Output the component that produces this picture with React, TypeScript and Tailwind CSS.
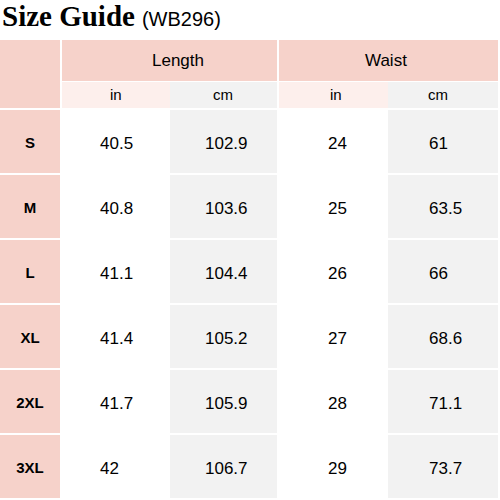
const rows = [
  { size: 'S', lin: '40.5', lcm: '102.9', win: '24', wcm: '61' },
  { size: 'M', lin: '40.8', lcm: '103.6', win: '25', wcm: '63.5' },
  { size: 'L', lin: '41.1', lcm: '104.4', win: '26', wcm: '66' },
  { size: 'XL', lin: '41.4', lcm: '105.2', win: '27', wcm: '68.6' },
  { size: '2XL', lin: '41.7', lcm: '105.9', win: '28', wcm: '71.1' },
  { size: '3XL', lin: '42', lcm: '106.7', win: '29', wcm: '73.7' },
]

const sans = "font-['Liberation_Sans',Arial,sans-serif]"

export default function App() {
  return (
    <div className={`w-[500px] h-[500px] bg-white text-black ${sans}`}>
      <div className="h-[40px] flex items-baseline pl-[2px]">
        <span className="font-['Liberation_Serif','Times_New_Roman',serif] font-bold text-[29px] leading-[32px]">
          Size Guide
        </span>
        <span className="ml-[7px] text-[20px] leading-[32px]">(WB296)</span>
      </div>

      <div className="flex gap-[2px] w-[498px]">
        {/* size column */}
        <div className="w-[60px] flex flex-col gap-[2px]">
          <div className="h-[68px] bg-[#f6d2ca]" />
          {rows.map(r => (
            <div key={r.size} className="h-[63px] bg-[#f6d2ca] flex items-center justify-center text-[15px] font-bold pt-[3px]">
              {r.size}
            </div>
          ))}
        </div>

        {/* Length */}
        <div className="w-[215px] flex flex-col">
          <div className="h-[41px] bg-[#f6d2ca] flex items-center pl-[90px] text-[17px] pt-[1px]">Length</div>
          <div className="h-[26px] mt-[1px] flex text-[15px]">
            <div className="w-[108px] bg-[#fdefec] flex items-center pl-[48px]">in</div>
            <div className="flex-1 bg-[#f2f2f2] flex items-center pl-[43px]">cm</div>
          </div>
          <div className="flex mt-[2px] text-[17px]">
            <div className="w-[108px] bg-white flex flex-col gap-[2px]">
              {rows.map(r => (
                <div key={r.size} className="h-[63px] flex items-center pl-[38px] pt-[4px]">{r.lin}</div>
              ))}
            </div>
            <div className="flex-1 flex flex-col gap-[2px]">
              {rows.map(r => (
                <div key={r.size} className="h-[63px] bg-[#f2f2f2] flex items-center pl-[35px] pt-[4px]">{r.lcm}</div>
              ))}
            </div>
          </div>
        </div>

        {/* Waist */}
        <div className="w-[219px] flex flex-col">
          <div className="h-[41px] bg-[#f6d2ca] flex items-center pl-[86px] text-[17px] pt-[1px]">Waist</div>
          <div className="h-[26px] mt-[1px] flex text-[15px]">
            <div className="w-[109px] bg-[#fdefec] flex items-center pl-[51px]">in</div>
            <div className="flex-1 bg-[#f2f2f2] flex items-center pl-[40px]">cm</div>
          </div>
          <div className="flex mt-[2px] text-[17px]">
            <div className="w-[109px] bg-white flex flex-col gap-[2px]">
              {rows.map(r => (
                <div key={r.size} className="h-[63px] flex items-center pl-[49px] pt-[4px]">{r.win}</div>
              ))}
            </div>
            <div className="flex-1 flex flex-col gap-[2px]">
              {rows.map(r => (
                <div key={r.size} className="h-[63px] bg-[#f2f2f2] flex items-center pl-[41px] pt-[4px]">{r.wcm}</div>
              ))}
            </div>
          </div>
        </div>
      </div>
    </div>
  )
}
